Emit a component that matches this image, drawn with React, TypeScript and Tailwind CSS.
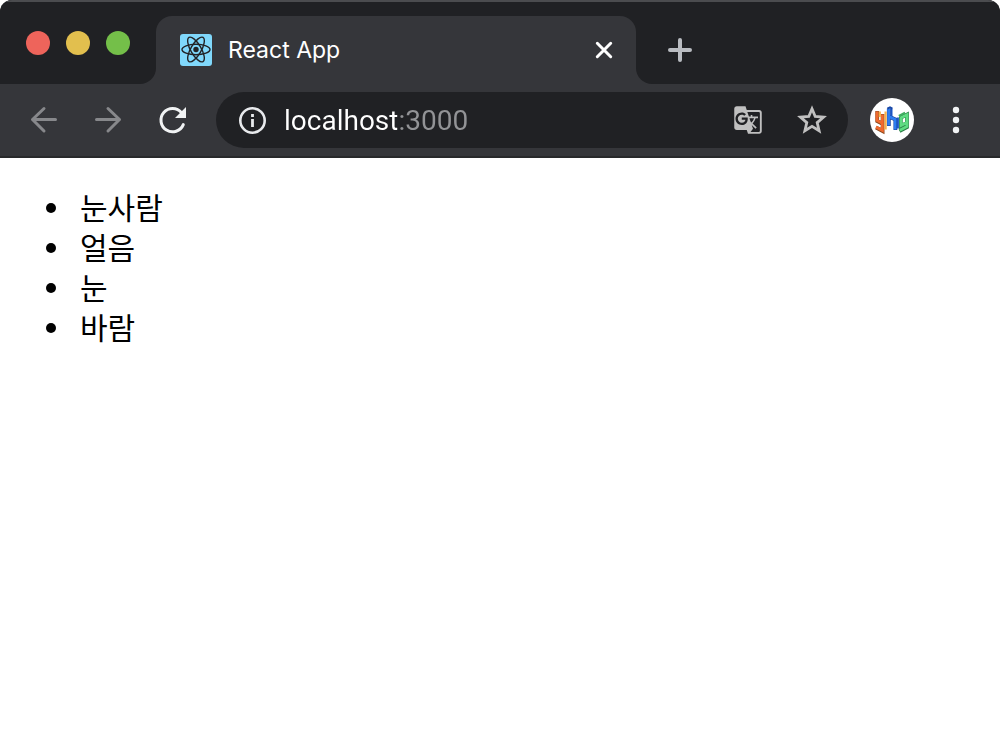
import type { ReactNode } from "react";
import { MdGTranslate } from "react-icons/md";

const words = ["눈사람", "얼음", "눈", "바람"];

function IconButton({ label, className, children }: { label: string; className: string; children: ReactNode }) {
  return (
    <button type="button" aria-label={label} className={`flex shrink-0 items-center justify-center ${className}`}>
      {children}
    </button>
  );
}

function ArrowIcon({ className }: { className?: string }) {
  return (
    <svg viewBox="0 0 32 32" className={`size-8 ${className ?? ""}`} fill="none" stroke="#87888b" strokeWidth="3" strokeLinecap="round" strokeLinejoin="round" aria-hidden="true">
      <path d="M27.5 15.5H4.5M16 4.5L4.5 15.5L16 27" />
    </svg>
  );
}

function ReactLogo() {
  return (
    <svg viewBox="0 0 32 32" className="size-8 shrink-0" fill="none" stroke="#222326" strokeWidth="1.4" aria-hidden="true">
      <rect width="32" height="32" rx="3" fill="#80d8fb" stroke="none" />
      <ellipse cx="16" cy="15.5" rx="14" ry="5.2" />
      <ellipse cx="16" cy="15.5" rx="14" ry="5.2" transform="rotate(60 16 15.5)" />
      <ellipse cx="16" cy="15.5" rx="14" ry="5.2" transform="rotate(120 16 15.5)" />
      <circle cx="16" cy="15.5" r="2.7" fill="#222326" stroke="none" />
    </svg>
  );
}

function Avatar() {
  return (
    <svg viewBox="0 0 44 44" className="size-11" fill="none" aria-hidden="true">
      <circle cx="22" cy="22" r="22" fill="#fff" />
      <g strokeWidth="3.8">
        <path d="M7.2 13V23L12 25.5M12.6 16V33L6 29.5" stroke="#8a4a20" />
        <path d="M18.8 10.5V28M19 18.5L25.4 21.5V32" stroke="#173d96" />
        <path d="M30.8 19V28L36 25.5M30 20L37 16.5V29L29.5 33" stroke="#2b7c46" />
      </g>
      <g strokeWidth="2.8">
        <path d="M7 13.5V22.5L12 25M12.4 16.5V32.5L6 29" stroke="#f0692e" />
        <path d="M9.8 13.5V19M15.6 13.5V31.5" stroke="#f6b04a" strokeWidth="2.2" />
        <path d="M18.6 11V27.5M19 18.5L25.2 21.5V31.5" stroke="#2d7df0" />
        <path d="M21.4 10.5V18M27.8 19.5V30.5" stroke="#1b55c4" strokeWidth="2.2" />
        <path d="M17.4 10.6L20 9.3L22.4 10.6" stroke="#1746a5" strokeWidth="2" />
        <path d="M31 19.5V27.5L36 25M30.4 20L37 16.8V28.5L29.8 32.2" stroke="#5fdc82" />
        <path d="M28.8 17.8L35 14.6" stroke="#3fae60" strokeWidth="2" />
      </g>
    </svg>
  );
}

export default function App() {
  return (
    <div className="min-h-screen bg-white">
      <div className="overflow-hidden rounded-t-xl">
        <header className="bg-[#35363a]">
          <div className="h-4 border-t-2 border-[#4b4c4f] bg-[#202124]" />
          <div className="flex h-17">
            <div className="flex w-39 shrink-0 items-start gap-4 rounded-br-2xl bg-[#202124] pt-[15px] pl-[26px]">
              <button type="button" aria-label="Close window" className="size-6 rounded-full bg-[#ee645b]" />
              <button type="button" aria-label="Minimize window" className="size-6 rounded-full bg-[#e2bf4e]" />
              <button type="button" aria-label="Zoom window" className="size-6 rounded-full bg-[#74bf49]" />
            </div>
            <div className="w-120 min-w-0 bg-[linear-gradient(#202124_50%,#35363a_50%)]">
              <div className="flex h-full items-center gap-4 rounded-t-2xl bg-[#35363a] pr-4 pl-6">
                <ReactLogo />
                <span className="min-w-0 flex-1 truncate font-[Inter,sans-serif] text-[23px] leading-8 text-white">React App</span>
                <IconButton label="Close tab" className="size-8">
                  <svg viewBox="0 0 32 32" className="size-8" stroke="#fff" strokeWidth="3" strokeLinecap="round" aria-hidden="true">
                    <path d="M9.3 9.3L22.7 22.7M22.7 9.3L9.3 22.7" />
                  </svg>
                </IconButton>
              </div>
            </div>
            <div className="flex min-w-0 flex-1 items-center rounded-bl-2xl bg-[#202124] pl-7">
              <IconButton label="New tab" className="size-8">
                <svg viewBox="0 0 32 32" className="size-8" stroke="#b9bcc1" strokeWidth="4" strokeLinecap="round" aria-hidden="true">
                  <path d="M16 6V26M6 16H26" />
                </svg>
              </IconButton>
            </div>
          </div>
          <div className="flex items-center border-b-2 border-[#28292b] pt-2 pr-6 pb-2 pl-7">
            <nav className="flex gap-8" aria-label="History">
              <IconButton label="Back" className="size-8">
                <ArrowIcon />
              </IconButton>
              <IconButton label="Forward" className="size-8">
                <ArrowIcon className="-scale-x-100" />
              </IconButton>
              <IconButton label="Reload" className="size-8">
                <svg viewBox="0 0 32 32" className="size-8" aria-hidden="true">
                  <path d="M27.3 20.6A11.6 11.6 0 1 1 25.5 8.8" fill="none" stroke="#f1f3f4" strokeWidth="3" strokeLinecap="round" />
                  <path d="M30 3V14H19Z" fill="#f1f3f4" />
                </svg>
              </IconButton>
            </nav>
            <div className="ml-7 flex h-14 min-w-0 flex-1 items-center rounded-full bg-[#202124] pr-5 pl-5">
              <IconButton label="Site information" className="size-8">
                <svg viewBox="0 0 32 32" className="size-8" fill="none" stroke="#e8eaed" aria-hidden="true">
                  <circle cx="16.5" cy="16.5" r="12.2" strokeWidth="2.6" />
                  <path d="M16.5 15V23M16.5 10V13" strokeWidth="2.8" />
                </svg>
              </IconButton>
              <input
                type="text"
                aria-label="Address"
                defaultValue="localhost:3000"
                className="ml-4 min-w-0 flex-1 bg-[linear-gradient(90deg,#ffffff_113px,#929396_113px)] bg-clip-text pt-0.5 font-[Roboto,sans-serif] text-[28px] leading-8 text-transparent caret-white outline-none"
              />
              <IconButton label="Translate this page" className="size-8">
                <MdGTranslate className="size-[30px] text-[#c0c0c0]" />
              </IconButton>
              <IconButton label="Bookmark this page" className="ml-8 size-8">
                <svg viewBox="0 0 32 32" className="size-8" fill="none" stroke="#c0c0c0" strokeWidth="2.8" aria-hidden="true">
                  <path d="M16 4.8L19.2 12.5L27.5 13.2L21.2 18.6L23.1 26.8L16 22.4L8.9 26.8L10.8 18.6L4.5 13.2L12.8 12.5Z" />
                </svg>
              </IconButton>
            </div>
            <IconButton label="Profile" className="ml-[22px] size-11 rounded-full">
              <Avatar />
            </IconButton>
            <IconButton label="Menu" className="ml-[22px] size-10">
              <svg viewBox="0 0 40 40" className="size-10" fill="#f1f3f4" aria-hidden="true">
                <circle cx="20" cy="10" r="3.2" />
                <circle cx="20" cy="20" r="3.2" />
                <circle cx="20" cy="30" r="3.2" />
              </svg>
            </IconButton>
          </div>
        </header>
      </div>
      <main className="py-7">
        <ul className="list-disc pl-18 font-['Liberation_Serif',serif] text-[32px] leading-10 text-black">
          {words.map((word) => (
            <li key={word} className="pl-2">
              <span className="align-top font-['Noto_Sans_CJK_KR',sans-serif] text-[30px]">{word}</span>
            </li>
          ))}
        </ul>
      </main>
    </div>
  );
}
